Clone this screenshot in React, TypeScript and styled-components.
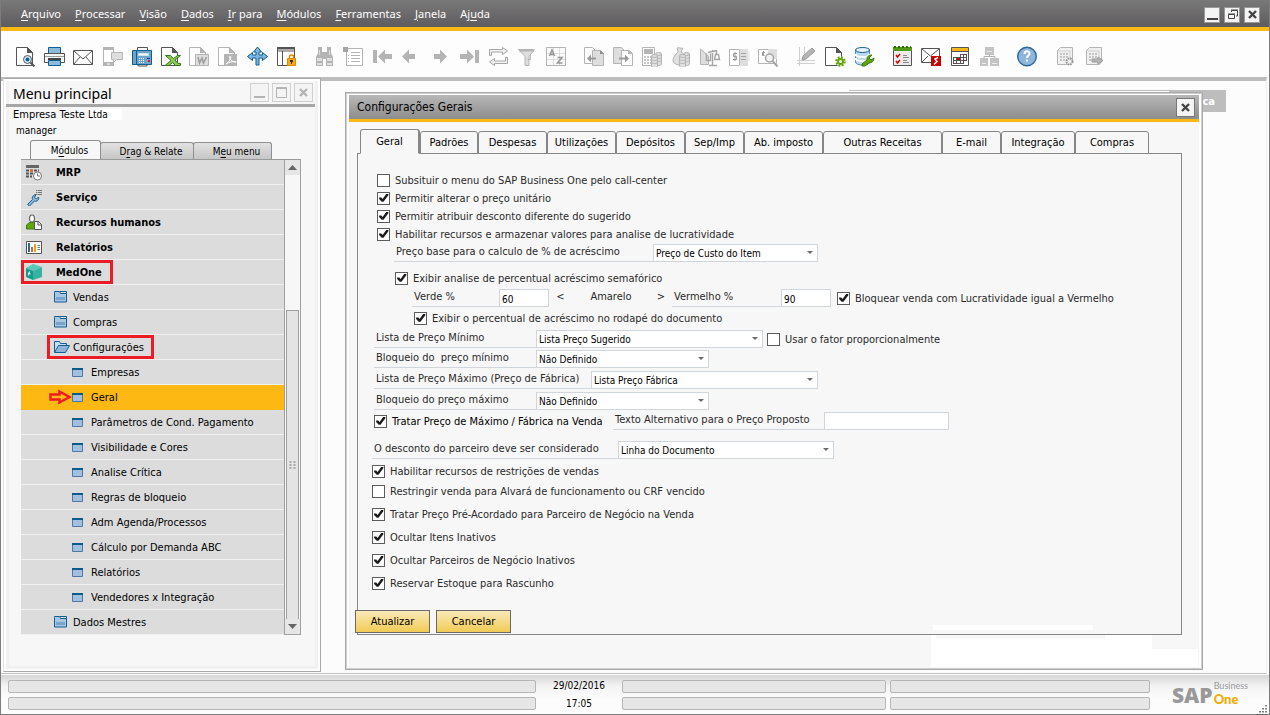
import React from "react";
import styled, { createGlobalStyle } from "styled-components";

const uiFont = '"DejaVu Sans Condensed", "Noto Sans", sans-serif';
const titleFont = '"Noto Sans", "Open Sans", sans-serif';
const gold = "#fdb813";

const Global = createGlobalStyle`
  *, *::before, *::after { box-sizing: border-box; }
  body { margin: 0; background: #fcfcfc; font-family: ${uiFont}; font-size: 11px; color: #000; }
  button, input, select { font: inherit; color: inherit; margin: 0; }
  button { padding: 0; border: 0; background: none; cursor: pointer; }
  ul { list-style: none; margin: 0; padding: 0; }
  svg { display: block; }
`;

/* ---------- shell ---------- */

const Shell = styled.div`
  min-height: 100vh;
  display: flex;
  flex-direction: column;
  border: 1px solid #7d7d7d;
  border-top: 0;
  background: #fcfcfc;
`;

const MenuBar = styled.header`
  height: 31px;
  flex: none;
  display: flex;
  align-items: center;
  justify-content: space-between;
  padding: 2px 9px 0 20px;
  background: linear-gradient(#7a7979, #5e5b5e);
  border-bottom: 4px solid ${gold};
`;

const MenuItems = styled.nav`
  display: flex;
  gap: 14px;
  padding-bottom: 2px;
`;

const MenuItem = styled.button`
  font-family: ${titleFont};
  font-size: 11px;
  line-height: 18px;
  color: #fff;
`;

const Accel = styled.span`
  text-decoration: underline;
  text-underline-offset: 2px;
`;

const WindowButtons = styled.div<{ $gap: number }>`
  display: flex;
  gap: ${(p) => p.$gap}px;
`;

const WindowButton = styled.button<{ $size: number; $tone: string; $line: string }>`
  width: ${(p) => p.$size}px;
  height: ${(p) => p.$size}px;
  display: grid;
  place-items: center;
  background: #f4f4f4;
  border: 1px solid ${(p) => p.$line};
  color: ${(p) => p.$tone};
`;

const Toolbar = styled.div`
  height: 46px;
  flex: none;
  display: flex;
  align-items: center;
  gap: 9px;
  padding: 5px 0 0 10px;
  background: #fdfdfd;
`;

const ToolGroup = styled.div`
  display: flex;
`;

const ToolButton = styled.button`
  width: 29px;
  height: 29px;
  display: grid;
  place-items: center;
`;

const Workspace = styled.main`
  position: relative;
  isolation: isolate;
  flex: 1;
  display: flex;
  align-items: stretch;
  padding: 0 63px 1px 2px;
  margin-right: 2px;
  border-top: 4px solid #bdbdbd;
  border-right: 1px solid #f0f0f4;
  border-bottom: 1px solid #c2c2c2;
`;

const BackWindow = styled.div`
  position: absolute;
  z-index: -1;
  top: 9px;
  right: 40px;
  width: 377px;
  height: 22px;
  display: flex;
  justify-content: flex-end;
  border-top: 1px solid #bdbdbd;
`;

const BackTab = styled.span`
  width: 57px;
  padding-right: 11px;
  text-align: right;
  background: #bdbdbd;
  color: #fff;
  font-weight: 700;
  line-height: 21px;
`;

/* ---------- main menu window ---------- */

const Side = styled.aside`
  flex: none;
  width: 318px;
  margin: -3px 24px 0 0;
  display: flex;
  flex-direction: column;
  border: 1px solid #a9a9a9;
  border-left-color: #e4e4e4;
  background: #fff;
  padding: 2px;
`;

const SideInner = styled.div`
  flex: 1;
  border: 3px solid #f1f1f1;
  border-top: 0;
  background: #f7f7f7;
`;

const SideHead = styled.div`
  display: flex;
  align-items: center;
  justify-content: space-between;
  height: 26px;
  margin-left: -3px;
  padding: 0 2px 0 7px;
  border-bottom: 3px solid #a6a6a6;
`;

const SideTitle = styled.h1`
  margin: 0;
  padding-top: 3px;
  font-family: ${titleFont};
  font-size: 14px;
  line-height: 20px;
  font-weight: 400;
`;

const Company = styled.div`
  padding-left: 4px;
  line-height: 16px;
`;

const CompanySuffix = styled.span`
  padding-right: 14px;
  font-size: 10px;
  background: #fff;
`;

const UserName = styled.div`
  padding-left: 7px;
  font-size: 10px;
  line-height: 16px;
`;

const SideTabs = styled.div`
  display: flex;
  align-items: flex-end;
  padding-left: 21px;
  margin-top: 1px;
`;

const SideTab = styled.button<{ $on?: boolean; $w: number }>`
  width: ${(p) => p.$w}px;
  height: ${(p) => (p.$on ? 19 : 17)}px;
  font-size: 10px;
  border: 1px solid #8f8f8f;
  border-bottom: 0;
  border-radius: 3px 3px 0 0;
  padding-left: 8px;
  margin-right: -1px;
  background: ${(p) => (p.$on ? "#f7f7f7" : "linear-gradient(#e2e2e2, #c6c6c6)")};
`;

const TreeBox = styled.div`
  display: flex;
  width: 280px;
  margin-left: 12px;
  border-top: 1px solid #999;
`;

const Tree = styled.ul`
  flex: 1;
`;

const TreeRow = styled.li<{ $level: number; $on?: boolean }>`
  position: relative;
  height: 25px;
  display: flex;
  align-items: center;
  padding-left: ${(p) => [5, 33, 51][p.$level]}px;
  background: ${(p) => (p.$on ? gold : "#dcdcdc")};
  border-bottom: 1px solid ${(p) => (p.$on ? gold : "#f0f0f0")};
  font-weight: ${(p) => (p.$level === 0 ? 700 : 400)};
`;

const TreeIcon = styled.span<{ $level: number }>`
  flex: none;
  width: ${(p) => [30, 19, 19][p.$level]}px;
`;

const RedFrame = styled.span<{ $left: number; $w: number }>`
  position: absolute;
  top: 0;
  left: ${(p) => p.$left}px;
  width: ${(p) => p.$w}px;
  height: 24px;
  border: 3px solid #ed1c24;
`;

const RedArrow = styled.svg`
  position: absolute;
  left: 28px;
  top: 4px;
`;

const Scroll = styled.div`
  width: 17px;
  display: flex;
  flex-direction: column;
  align-items: center;
  border: 1px solid #a0a0a0;
  border-top: 0;
  background: #f7f7f7;
`;

const ScrollEnd = styled.button`
  width: 15px;
  height: 15px;
  flex: none;
  display: grid;
  place-items: center;
  background: #e6e6e6;
`;

const ScrollThumb = styled.div`
  width: 13px;
  flex: 1;
  margin-top: 135px;
  display: grid;
  place-items: center;
  background: #e4e4e4;
  border: 1px solid #a0a0a0;
  border-bottom: 0;
`;

/* ---------- settings dialog ---------- */

const Dialog = styled.section`
  flex: 1;
  min-width: 0;
  margin: 11px 0 2px;
  display: flex;
  flex-direction: column;
  border: 1px solid #a9a9a9;
  outline: 1px solid #cfcfcf;
  outline-offset: -2px;
  background: #fff;
  padding: 2px 3px 1px 3px;
`;

const DialogHead = styled.header`
  height: 27px;
  flex: none;
  display: flex;
  align-items: center;
  justify-content: space-between;
  padding: 0 4px 0 8px;
  background: linear-gradient(#b8b8b8, #8d8d8d);
  border-bottom: 3px solid ${gold};
`;

const DialogTitle = styled.h2`
  margin: 0;
  font-size: 12px;
  line-height: 20px;
  font-weight: 400;
`;

const DialogBody = styled.div`
  position: relative;
  isolation: isolate;
  flex: 1;
  display: flex;
  flex-direction: column;
  padding: 7px 17px 33px 8px;
  background: #f7f7f7;
`;

const Backdrop = styled.svg`
  position: absolute;
  z-index: -1;
  right: 0;
  bottom: 0;
`;

const Tabs = styled.div`
  display: flex;
  align-items: flex-end;
  padding-left: 3px;
  margin-bottom: -1px;
  position: relative;
`;

const Tab = styled.button<{ $on?: boolean; $w: number }>`
  flex: 0 1 ${(p) => p.$w}px;
  height: ${(p) => (p.$on ? 25 : 23)}px;
  white-space: nowrap;
  border: 1px solid #868686;
  border-right-width: ${(p) => (p.$on ? 2 : 1)}px;
  border-bottom-color: ${(p) => (p.$on ? "#f7f7f7" : "#868686")};
  border-radius: 3px 3px 0 0;
  background: #f7f7f7;
  text-align: center;
`;

const Panel = styled.form`
  flex: 1;
  display: flex;
  flex-direction: column;
  padding: 17px 14px 0 14px;
  border: 1px solid #868686;
  color: #2a2a2a;
`;

const Row = styled.div<{ $indent: number; $top?: number }>`
  display: flex;
  align-items: center;
  height: 18px;
  margin-top: ${(p) => p.$top ?? 0}px;
  padding-left: ${(p) => p.$indent}px;
  white-space: nowrap;
`;

const CheckLabel = styled.label<{ $gap?: number; $dark?: boolean; $w?: number }>`
  display: flex;
  align-items: center;
  gap: 5px;
  margin-left: ${(p) => p.$gap ?? 0}px;
  width: ${(p) => (p.$w ? `${p.$w}px` : "auto")};
  color: ${(p) => (p.$dark ? "#000" : "inherit")};
`;

const CheckText = styled.span`
  padding-top: 2px;
  line-height: 16px;
`;

const Box = styled.input`
  appearance: none;
  flex: none;
  width: 13px;
  height: 13px;
  border: 1px solid #5c5c5c;
  background: #fff;
  display: grid;

  &:checked::before {
    content: "";
    background: #1c1c1c;
    clip-path: polygon(10% 46%, 30% 46%, 42% 60%, 74% 14%, 94% 14%, 94% 26%, 50% 84%, 34% 84%, 10% 60%);
  }
`;

const FieldLabel = styled.label<{ $w: number }>`
  flex: none;
  width: ${(p) => p.$w}px;
  height: 18px;
  padding-left: 2px;
  line-height: 15px;
  border-bottom: 1px solid #d0d6dc;
`;

const Gap = styled.span<{ $w: number }>`
  flex: none;
  width: ${(p) => p.$w}px;
  line-height: 15px;
  height: 18px;
  text-align: center;
`;

const Field = styled.input<{ $w: number }>`
  flex: none;
  width: ${(p) => p.$w}px;
  height: 18px;
  padding: 2px 2px 0;
  font-size: 10px;
  color: #000;
  background: #fff;
  border: 1px solid #d0d6dc;
`;

const SelectBox = styled.span<{ $w: number }>`
  flex: none;
  display: grid;
  grid-template-columns: 1fr 13px;
  align-items: center;
  width: ${(p) => p.$w}px;
  height: 18px;
  background: #fff;
  border: 1px solid #d0d6dc;
`;

const Select = styled.select`
  grid-area: 1 / 1 / 2 / 3;
  appearance: none;
  width: 100%;
  height: 16px;
  padding: 2px 2px 0;
  font-size: 10px;
  line-height: 14px;
  color: #000;
  background: none;
  border: 0;
`;

const SelectArrow = styled.svg`
  grid-area: 1 / 2 / 2 / 3;
  pointer-events: none;
`;

const Actions = styled.div`
  display: flex;
  gap: 6px;
  margin: auto 0 0 -17px;
  padding: 16px 0 1px;
`;

const ActionButton = styled.button`
  width: 75px;
  height: 23px;
  color: #000;
  border: 1px solid #6a6a6a;
  background: linear-gradient(#f9e9b8, #f2cb55);
`;

/* ---------- status bar ---------- */

const Status = styled.footer`
  flex: none;
  display: flex;
  align-items: center;
  height: 39px;
  margin-top: 1px;
  padding: 1px 0 0 7px;
  background: linear-gradient(#d6d6d6, #f4f4f4 30%, #fcfcfc 60%);
`;

const StatusCells = styled.div<{ $grow: number }>`
  flex: ${(p) => p.$grow} 1 0;
  display: grid;
  gap: 4px;
`;

const StatusCell = styled.div`
  height: 13px;
  border: 1px solid #b5b5b5;
  border-radius: 2px;
  background: #e6e6e6;
`;

const Clock = styled.div`
  width: 82px;
  margin: 0 2px;
  text-align: center;
  font-size: 10px;
  line-height: 18px;
`;

const StatusGap = styled.div`
  width: 4px;
`;

const Brand = styled.div`
  width: 119px;
  display: flex;
  align-items: center;
  padding-left: 22px;
  position: relative;
`;

const BrandSap = styled.span`
  font-family: "Open Sans", sans-serif;
  font-size: 21px;
  line-height: 26px;
  font-weight: 800;
  color: #999;
`;

const BrandName = styled.span`
  display: grid;
  padding: 0 0 3px 1px;
  font-family: Lato, sans-serif;
`;

const BrandTop = styled.span`
  font-size: 9px;
  line-height: 11px;
  color: #999;
`;

const BrandOne = styled.span`
  font-size: 13px;
  line-height: 16px;
  font-weight: 900;
  color: #f0ab00;
`;

const Grip = styled.svg`
  position: absolute;
  right: 2px;
  bottom: -6px;
`;

/* ---------- toolbar drawings ---------- */

const g = "#b4b4b4";
const l = "#dedede";
const d = "#555";
const b = "#0f5f92";

const Doc = ({ c = d, x = 1 }: { c?: string; x?: number }) => (
  <g transform={`translate(${x} 0)`}>
    <path d="M.5 1.500h11l5 5v13H.5z" fill="#fff" stroke={c} />
    <path d="M11 1l6 6h-6z" fill={c} />
  </g>
);

const Coins = ({ x, y }: { x: number; y: number }) => (
  <g transform={`translate(${x} ${y})`} fill={l} stroke={g}>
    <path d="M.5 2v10c0 2 6 2 6 0V2" />
    <path d="M.5 5c0 2 6 2 6 0M.5 8c0 2 6 2 6 0" fill="none" />
    <ellipse cx="3.500" cy="2" rx="3" ry="1.500" />
  </g>
);

const Server = () => (
  <>
    <path d="M2.500 4.500l3-3h12v14l-2 3h-13z" fill="#f0f0f0" stroke={g} />
    <path d="M3 5h12V18" fill="none" stroke="#cfcfcf" />
    <path d="M5 8h9M5 11h9M5 14h9" stroke="#999" strokeDasharray="2 1" />
  </>
);

const icons: Record<string, React.ReactNode> = {
  preview: (
    <>
      <Doc />
      <circle cx="12.500" cy="13.500" r="4" fill="#d6ecfa" stroke={d} />
      <circle cx="12.500" cy="13.500" r="2" fill={b} />
      <path d="M15.500 16.500l4 4" stroke={d} strokeWidth="2" />
    </>
  ),
  print: (
    <>
      <path d="M4.500 1.500h12v6h-12z" fill="#8db9da" stroke={b} />
      <path d="M.5 7.500h20v9H.5z" fill="#f6f6f6" stroke={d} />
      <path d="M1 10.500h19" stroke="#999" />
      <path d="M4 13h13" stroke="#444" strokeWidth="2" />
      <path d="M4.500 14.500h12v5h-12z" fill="#8db9da" stroke={b} />
    </>
  ),
  mail: (
    <>
      <path d="M.5 4.500h19v14H.5z" fill="#fff" stroke={d} />
      <path d="M1 5l9 8 9-8M1 18l6-7M19 18l-6-7" fill="none" stroke={d} />
    </>
  ),
  sms: (
    <>
      <path d="M1 1h11v19H1z" fill={g} />
      <path d="M2 4h9v12H2z" fill="#fff" />
      <path d="M5 18h3" stroke="#fff" />
      <path d="M9.500 6.500h11v7h-6l-3 3v-3h-2z" fill={l} stroke={g} />
    </>
  ),
  fax: (
    <>
      <path d="M6.500 1.500h10v4h-10zM7 18.500h9v1.500h-9z" fill="#fff" stroke={d} />
      <path d="M1.500 4.500h19v14h-19z" fill="#6ea3cc" stroke={b} />
      <path d="M5.500 5v13" stroke={b} />
      <path d="M7.500 7.500h10v2h-10z" fill="#fff" stroke="#cfe3f2" />
      <path d="M8 12.500h6M8 14.500h6M8 16.500h6" stroke="#fff" strokeDasharray="1 1" />
      <path d="M16 12.500h3" stroke="#123c5c" />
      <path d="M17 15h2" stroke="#d22" strokeWidth="2" />
    </>
  ),
  excel: (
    <>
      <Doc />
      <path d="M5.500 9.500h5l3 3 4-3h3l-5.500 4.500 3 3.500h2.500v2h-5l-3-3-3.500 3H5l6-5z" fill="#8cc84b" stroke="#2f7d1c" />
    </>
  ),
  word: (
    <>
      <Doc c={g} x={0} />
      <path d="M6.500 8.500h13v11h-13z" fill={l} stroke={g} />
      <path d="M9 11l1.500 6 2.500-5 1.500 5 3-6" fill="none" stroke="#9c9c9c" strokeWidth="1.500" />
    </>
  ),
  pdf: (
    <>
      <Doc c={g} x={0} />
      <path d="M6 8h13v12H6z" fill={g} />
      <path d="M8 18c4-2 6-8 4-8s0 6 6 6c-3-1-7 0-10 2z" fill="none" stroke="#fff" />
    </>
  ),
  move: (
    <path
      d="M10.500 1l4 5h-2.500v3h3.500V6.500l5 4-5 4V12H12v7H9v-7H5.500v2.500l-5-4 5-4V9H9V6H6.500z"
      fill="#7db7e0"
      stroke={b}
    />
  ),
  lock: (
    <>
      <path d="M1.500 1.500h17v18h-17z" fill="#fff" stroke={d} />
      <path d="M1 3.500h18" stroke={d} strokeWidth="4" />
      <path d="M2 4h16" stroke="#fff" />
      <path d="M6.500 5v14" stroke={d} />
      <path d="M13.500 12.500v-2c0-2 4-2 4 0v2" fill="none" stroke="#d98c00" strokeWidth="1.500" />
      <path d="M11.500 12.500h8v7h-8z" fill="#fba919" stroke="#d98c00" />
      <path d="M14 14h3v2h-1v2h-1v-2h-1z" fill="#333" />
    </>
  ),
  find: (
    <>
      <path d="M4 1h4v5h5V1h4v6l2 4v9h-7v-7h-3v7H2v-9l2-4z" fill={g} />
      <path d="M3 12h5v3H3zM13 12h5v3h-5zM3 17h5v2H3zM13 17h5v2h-5zM5 4h1v5H5zM15 4h1v5h-1z" fill={l} />
    </>
  ),
  list: (
    <>
      <path d="M3.500 2.500h16v17h-16z" fill="#fff" stroke={g} />
      <path d="M0 1h5v5H0z" fill="#a4a4a4" />
      <path d="M8 6.500h9M8 9.500h9M8 12.500h9M8 15.500h9" stroke={g} />
      <path d="M5 9.500h1M5 12.500h1M5 15.500h1" stroke={g} />
    </>
  ),
  first: <path d="M1 4h4v13H1zM6 10.500l7-7v4.500h7v5h-7v4.500z" fill={g} />,
  prev: <path d="M1 10.500l7-7v4.500h6v5H8v4.500z" fill={g} />,
  next: <path d="M17 10.500l-7-7v4.500H4v5h6v4.500z" fill={g} />,
  last: <path d="M15 10.500l-7-7v4.500H1v5h7v4.500zM16 4h4v13h-4z" fill={g} />,
  refresh: (
    <g fill="none" stroke="#a6a6a6">
      <path d="M1.500 9.500v-6h13v-2l5 3.500-5 3.500v-2.500h-11v3.500z" fill="#f2f2f2" />
      <path d="M19.500 11.500v6h-13v2l-5-3.500 5-3.500v2.500h11v-3.500z" fill="#f2f2f2" />
    </g>
  ),
  filter: (
    <>
      <path d="M1.500 3.500h16l-5.500 7v9H8v-9z" fill={l} stroke={g} />
      <path d="M2 4.500h15" stroke={g} strokeWidth="2" />
      <path d="M13.500 8.500v5h-3" fill="none" stroke={g} />
    </>
  ),
  sort: (
    <>
      <path d="M.5 1.500h19v18H.5z" fill="#fafafa" stroke={g} />
      <path d="M1 7.500h18M1 13.500h18M7.500 2v17M13.500 2v17" stroke={l} />
      <path d="M3.500 10l2.500-6 2.500 6M4 8.500h4M11.500 11.500h4.500l-4.500 5.500h5" fill="none" stroke="#999" strokeWidth="1.600" />
    </>
  ),
  base: (
    <>
      <path d="M.5 1.500h8l3 3v13H.5z" fill="#fff" stroke={g} />
      <path d="M8.500 4.500h8l3 3v12h-11z" fill={l} stroke={g} />
      <path d="M16 4v4h4z" fill="#8e8e8e" />
      <path d="M3 12.500l4-4v3h5v2H7v3z" fill="#999" />
    </>
  ),
  target: (
    <>
      <path d="M.5 1.500h8l3 3v13H.5z" fill={l} stroke={g} />
      <path d="M8.500 4.500h8l3 3v12h-11z" fill="#fff" stroke={g} />
      <path d="M15 4v4h5z" fill={g} />
      <path d="M16 12.500l-4-4v3H6v2h6v3z" fill="#999" />
    </>
  ),
  calc: (
    <>
      <path d="M.5 1.500h12v18H.5z" fill="#fff" stroke={g} />
      <path d="M2 3h9v5H2z" fill={g} />
      <path d="M2 11h8M2 14h8M2 17h8" stroke={g} strokeWidth="1.500" strokeDasharray="2 1" />
      <Coins x={13} y={6} />
      <Coins x={9} y={8} />
    </>
  ),
  money: (
    <>
      <path d="M6 2c2-1 4 1 6 0l-2 4c4 2 6 6 6 9s-3 4-7 4-7-2-7-5 3-6 5-8z" fill={l} stroke={g} />
      <Coins x={12} y={6} />
      <Coins x={8} y={8} />
    </>
  ),
  scales: (
    <>
      <path d="M.5 3v15.500h8V10z" fill={l} stroke={g} />
      <path d="M12.500 4v15M8 6.500l9-2M9 19.500h8M6.500 7.500v7h4v-7M16.500 5v3M14.500 13.500l1-5h3l1 5z" fill="none" stroke="#a6a6a6" strokeWidth="1.400" />
    </>
  ),
  dollar: (
    <>
      <path d="M.5 3.500h18v16H.5z" fill="#fff" stroke={g} />
      <path d="M10 3h9v17h-9z" fill={l} />
      <path d="M10.500 4v15" stroke={g} />
      <path d="M12 7.500h5M12 10.500h5M12 13.500h5" stroke="#a4a4a4" />
      <path d="M8 7.500H4.500v3h3v3H4M6 6v9" fill="none" stroke="#999" />
      <path d="M20 5v10" stroke={l} />
    </>
  ),
  search: (
    <>
      <path d="M.5 3.500h18v14H.5z" fill="#fff" stroke={g} />
      <path d="M10 3h9v10h-9z" fill={l} />
      <path d="M7 6.500H4.500v3h2M5.500 5v5" fill="none" stroke="#999" />
      <circle cx="11.500" cy="12" r="4" fill="#f2f2f2" stroke="#a4a4a4" strokeWidth="1.500" />
      <path d="M14.500 15l5 5.500" stroke="#a4a4a4" strokeWidth="2" />
    </>
  ),
  pencil: (
    <>
      <path d="M3.500 1v19M8.500 1v8M1 14.500h18M1 17.500h18" stroke="#d0d0d0" />
      <path d="M6 14l1-4 9-8 3 3-9 8z" fill={g} stroke="#999" />
    </>
  ),
  docGear: (
    <>
      <Doc x={0} />
      <circle cx="15.500" cy="15.500" r="5" fill="#fff" />
      <circle cx="15.500" cy="15.500" r="4" fill="none" stroke="#62a60a" strokeWidth="2.500" strokeDasharray="1.800 1.340" />
      <circle cx="15.500" cy="15.500" r="2.500" fill="none" stroke="#62a60a" strokeWidth="2" />
    </>
  ),
  database: (
    <>
      <path d="M1.500 4v12c0 4 14 4 14 0V4" fill="#bcd9ee" stroke="#4a8dbd" />
      <path d="M1.500 8c0 4 14 4 14 0M1.500 12c0 4 14 4 14 0" fill="none" stroke="#fff" strokeWidth="2" />
      <ellipse cx="8.500" cy="4" rx="7" ry="2.500" fill="#e8f3fb" stroke={b} />
      <path d="M8 18l5-4c0-4 2-5 5-5l-3 3 2 2 3-2c0 3-2 5-5 5l-4 3-3 0z" fill="#62a60a" stroke="#3c7a12" />
    </>
  ),
  tasks: (
    <>
      <path d="M1.500 2.500h18v17h-18z" fill="#ececec" stroke={d} />
      <path d="M1 1h19v4H1z" fill="#4f9a17" />
      <path d="M2 1h17" stroke="#2e6b0b" strokeWidth="2" strokeDasharray="2 2" />
      <path d="M4 9l1.500 2L8 8M4 15l1.500 2L8 14" fill="none" stroke="#c00" strokeWidth="1.400" />
      <path d="M11 9.500h4M11 11.500h6M11 14.500h4M11 16.500h6" stroke="#888" />
    </>
  ),
  alert: (
    <>
      <path d="M.5 2.500h18v14H.5z" fill="#fff" stroke={d} />
      <path d="M1 3l8.500 7L18 3M1 16l6-6" fill="none" stroke={d} />
      <path d="M10 10h10v10H10z" fill="#c00" />
      <path d="M17 11.500l-3 1.500 2 2.500-3 3" fill="none" stroke="#fff" strokeWidth="1.500" />
    </>
  ),
  calendar: (
    <>
      <path d="M1.500 1.500h17v18h-17z" fill="#fff" stroke={d} />
      <path d="M2 2h16v3H2z" fill="#fbb917" />
      <path d="M2 5.500h16" stroke={d} />
      <path d="M3.500 11.500h13M3.500 14.500h13M3.500 17.500h10M3.500 11v7M6.500 11v7M10.500 8v10M13.500 8v10M16.500 8v7M10 8.500h7" stroke={d} fill="none" />
      <path d="M7 12h3v2H7z" fill="#c00" />
    </>
  ),
  org: (
    <>
      <path d="M6 1h9v8H6zM1 12h8v8H1zM11 12h9v8h-9z" fill="#c4c4c4" />
      <path d="M10.500 9v2M5 12v-1.500h11V12" fill="none" stroke={g} />
      <path d="M8 5.500h5M3 17.500h4M13 17.500h5" stroke="#eee" />
    </>
  ),
  help: (
    <>
      <circle cx="10" cy="10.500" r="9.300" fill="#8fb6dc" stroke="#2a6898" strokeWidth="1.400" />
      <path d="M7.500 8c0-3.500 5-3.500 5-.5 0 2-2.500 2-2.500 4.500M10 13.500v2" fill="none" stroke="#fff" strokeWidth="2" />
    </>
  ),
  serverGear: (
    <>
      <Server />
      <circle cx="14.500" cy="15.500" r="3" fill="#eee" stroke="#999" strokeWidth="2" strokeDasharray="1.500 .9" />
    </>
  ),
  serverGo: (
    <>
      <Server />
      <path d="M8 13h6v-2l5 3.500-5 3.500v-2H8z" fill={g} stroke="#999" />
    </>
  ),
};

const toolGroups: [string, string][][] = [
  [
    ["preview", "Visualizar impressão"], ["print", "Imprimir"], ["mail", "E-mail"], ["sms", "SMS"], ["fax", "Fax"],
    ["excel", "Excel"], ["word", "Word"], ["pdf", "PDF"], ["move", "Iniciar aplicação"], ["lock", "Bloquear tela"],
  ],
  [
    ["find", "Procurar"], ["list", "Adicionar"], ["first", "Primeiro"], ["prev", "Anterior"], ["next", "Próximo"],
    ["last", "Último"], ["refresh", "Atualizar"], ["filter", "Filtrar"], ["sort", "Classificar"],
  ],
  [
    ["base", "Documento base"], ["target", "Documento destino"], ["calc", "Lucro bruto"], ["money", "Meios de pagamento"],
    ["scales", "Volume e peso"], ["dollar", "Lançamento"], ["search", "Consulta"],
  ],
  [["pencil", "Editar"], ["docGear", "Configurar formulário"], ["database", "Consultas"]],
  [["tasks", "Atividades"], ["alert", "Alertas"], ["calendar", "Calendário"], ["org", "Organograma"]],
  [["help", "Ajuda"]],
  [["serverGear", "Configurar servidor"], ["serverGo", "Enviar"]],
];

/* ---------- window glyphs ---------- */

const MinimizeGlyph = () => (
  <svg width="13" height="13"><path d="M1 10h11v2H1z" fill="currentColor" /></svg>
);
const RestoreGlyph = () => (
  <svg width="13" height="13" fill="none" stroke="currentColor">
    <path d="M2.500 6.500h6v4h-6zM2 6h7M5.500 4V2.500h6V8H10M5 2h7" />
  </svg>
);
const MaximizeGlyph = () => (
  <svg width="13" height="13" fill="none" stroke="currentColor"><path d="M1.500 1.500h10v10h-10zM1 2.500h11" /></svg>
);
const CloseGlyph = () => (
  <svg width="13" height="13" stroke="currentColor" strokeWidth="2.400"><path d="M3 3l7 7M10 3l-7 7" /></svg>
);

/* ---------- tree drawings ---------- */

const FolderIcon = () => (
  <svg width="14" height="12">
    <path d="M.5 1.500V.5h5l1 2h6v8.500H.5z" fill="#a9c6e2" stroke="#0f5f92" />
    <path d="M6 .5h6.500v2" fill="none" stroke="#0f5f92" />
    <path d="M2 6h9v3H2z" fill="#7ba4cc" />
  </svg>
);
const OpenFolderIcon = () => (
  <svg width="16" height="12">
    <path d="M.5 11V.5h5l1 2h6V5" fill="#c9dcee" stroke="#0f5f92" />
    <path d="M.5 11.500l4-7h11l-4 7z" fill="#8fb4d8" stroke="#0f5f92" />
  </svg>
);
const FormIcon = () => (
  <svg width="11" height="9">
    <path d="M.5.5h10v8H.5z" fill="#a3bfde" stroke="#4f78a8" />
    <path d="M0 1h11" stroke="#0a5a8c" strokeWidth="2" />
  </svg>
);
const MrpIcon = () => (
  <svg width="17" height="17">
    <path d="M0 2.500h13" stroke="#666" strokeWidth="3" />
    <path d="M0 6.500h13M0 9.500h8M0 12.500h6" stroke="#555" strokeWidth="2" strokeDasharray="3 1" />
    <path d="M4 6.500h3" stroke="#e2641e" strokeWidth="2" />
    <circle cx="11.500" cy="12" r="4" fill="#fff" stroke="#777" />
    <path d="M11.500 9.500V12H14" fill="none" stroke="#777" />
  </svg>
);
const ServiceIcon = () => (
  <svg width="17" height="17">
    <path d="M1.500 15.500l5-5c-1-2 1-5 3.500-5l-1.500 3 2 1.500 2-2c1 3-2 5-4 4l-5 5z" fill="#8fb8dc" stroke="#0f5f92" />
    <path d="M10 1.500h1.500M12 1.500h4M10 3.500h1.500M12 3.500h4M10 5.500h1.500M12 5.500h4" stroke="#777" />
  </svg>
);
const PeopleIcon = () => (
  <svg width="17" height="17">
    <path d="M.5 15V11l3-2.500h4L9 10v5z" fill="#62a60a" stroke="#3c7a12" />
    <ellipse cx="6" cy="4.500" rx="2.500" ry="3.500" fill="#fff" stroke="#666" strokeWidth="1.200" />
    <path d="M8.500 7.500h4l3 3v5h-7z" fill="#fff" stroke="#555" />
    <path d="M12 7.500v3.500h3.500" fill="none" stroke="#555" />
  </svg>
);
const ReportsIcon = () => (
  <svg width="17" height="17">
    <path d="M.5 2.500h15v12H.5z" fill="#fff" stroke="#555" />
    <path d="M3 4v9" stroke="#1f6fa8" strokeWidth="2" />
    <path d="M6 8v5" stroke="#e2641e" strokeWidth="2" />
    <path d="M9 5v8" stroke="#f0a020" strokeWidth="2" />
    <path d="M11.500 6.500H14M11.500 8.500H14M11.500 10.500H14" stroke="#777" />
  </svg>
);
const MedOneIcon = () => (
  <svg width="17" height="17">
    <path d="M0 4l7-4 9 3-9 4z" fill="#5cc7b4" />
    <path d="M0 4l7 3v9l-7-3z" fill="#129c8c" />
    <path d="M7 7l9-4v10l-9 3z" fill="#35b3a0" />
    <path d="M2 9l2.500 1M3.500 7.500l-1 4" stroke="#fff" />
  </svg>
);

type Node = { text: string; level: number; icon: React.ReactNode; on?: boolean; frame?: [number, number] };

const nodes: Node[] = [
  { text: "MRP", level: 0, icon: <MrpIcon /> },
  { text: "Serviço", level: 0, icon: <ServiceIcon /> },
  { text: "Recursos humanos", level: 0, icon: <PeopleIcon /> },
  { text: "Relatórios", level: 0, icon: <ReportsIcon /> },
  { text: "MedOne", level: 0, icon: <MedOneIcon />, frame: [0, 92] },
  { text: "Vendas", level: 1, icon: <FolderIcon /> },
  { text: "Compras", level: 1, icon: <FolderIcon /> },
  { text: "Configurações", level: 1, icon: <OpenFolderIcon />, frame: [26, 107] },
  { text: "Empresas", level: 2, icon: <FormIcon /> },
  { text: "Geral", level: 2, icon: <FormIcon />, on: true },
  { text: "Parâmetros de Cond. Pagamento", level: 2, icon: <FormIcon /> },
  { text: "Visibilidade e Cores", level: 2, icon: <FormIcon /> },
  { text: "Analise Crítica", level: 2, icon: <FormIcon /> },
  { text: "Regras de bloqueio", level: 2, icon: <FormIcon /> },
  { text: "Adm Agenda/Processos", level: 2, icon: <FormIcon /> },
  { text: "Cálculo por Demanda ABC", level: 2, icon: <FormIcon /> },
  { text: "Relatórios", level: 2, icon: <FormIcon /> },
  { text: "Vendedores x Integração", level: 2, icon: <FormIcon /> },
  { text: "Dados Mestres", level: 1, icon: <FolderIcon /> },
];

const menus: [string, string, string][] = [
  ["", "A", "rquivo"], ["", "P", "rocessar"], ["", "V", "isão"], ["", "D", "ados"], ["", "I", "r para"],
  ["", "M", "ódulos"], ["", "F", "erramentas"], ["", "J", "anela"], ["Aj", "u", "da"],
];

const tabs: [string, number][] = [
  ["Geral", 60], ["Padrões", 58], ["Despesas", 69], ["Utilizações", 69], ["Depósitos", 69], ["Sep/Imp", 59],
  ["Ab. imposto", 79], ["Outras Receitas", 119], ["E-mail", 59], ["Integração", 74], ["Compras", 74],
];

/* ---------- form parts ---------- */

type CheckProps = { text: string; on?: boolean; gap?: number; dark?: boolean; w?: number };
const Check = ({ text, on, gap, dark, w }: CheckProps) => (
  <CheckLabel $gap={gap} $dark={dark} $w={w}>
    <Box type="checkbox" defaultChecked={on} />
    <CheckText>{text}</CheckText>
  </CheckLabel>
);

const Combo = ({ id, w, value }: { id: string; w: number; value: string }) => (
  <SelectBox $w={w}>
    <Select id={id} defaultValue={value}>
      <option>{value}</option>
    </Select>
    <SelectArrow width="13" height="12"><path d="M3 4h6L6 7z" fill="#6a6a6a" /></SelectArrow>
  </SelectBox>
);

export default function App() {
  return (
    <Shell>
      <Global />
      <MenuBar>
        <MenuItems>
          {menus.map(([a, k, z]) => (
            <MenuItem key={k + z}>{a}<Accel>{k}</Accel>{z}</MenuItem>
          ))}
        </MenuItems>
        <WindowButtons $gap={4}>
          <WindowButton $size={16} $tone="#444" $line="#999" aria-label="Minimizar"><MinimizeGlyph /></WindowButton>
          <WindowButton $size={16} $tone="#444" $line="#999" aria-label="Restaurar"><RestoreGlyph /></WindowButton>
          <WindowButton $size={16} $tone="#444" $line="#999" aria-label="Fechar"><CloseGlyph /></WindowButton>
        </WindowButtons>
      </MenuBar>

      <Toolbar>
        {toolGroups.map((group, i) => (
          <ToolGroup key={i}>
            {group.map(([name, label]) => (
              <ToolButton key={name} aria-label={label}>
                <svg width="21" height="21" viewBox="0 0 21 21">{icons[name]}</svg>
              </ToolButton>
            ))}
          </ToolGroup>
        ))}
      </Toolbar>

      <Workspace>
        <BackWindow><BackTab>ca</BackTab></BackWindow>

        <Side>
          <SideInner>
            <SideHead>
              <SideTitle>Menu principal</SideTitle>
              <WindowButtons $gap={3}>
                <WindowButton $size={19} $tone="#b4b4b4" $line="#cfcfcf" aria-label="Minimizar"><MinimizeGlyph /></WindowButton>
                <WindowButton $size={19} $tone="#b4b4b4" $line="#cfcfcf" aria-label="Maximizar"><MaximizeGlyph /></WindowButton>
                <WindowButton $size={19} $tone="#b4b4b4" $line="#cfcfcf" aria-label="Fechar"><CloseGlyph /></WindowButton>
              </WindowButtons>
            </SideHead>
            <Company>Empresa Teste <CompanySuffix>Ltda</CompanySuffix></Company>
            <UserName>manager</UserName>
            <SideTabs>
              <SideTab $on $w={71}>M<Accel>ó</Accel>dulos</SideTab>
              <SideTab $w={94}>D<Accel>r</Accel>ag &amp; Relate</SideTab>
              <SideTab $w={79}>M<Accel>e</Accel>u menu</SideTab>
            </SideTabs>
            <TreeBox>
              <Tree>
                {nodes.map((n, i) => (
                  <TreeRow key={i} $level={n.level} $on={n.on}>
                    <TreeIcon $level={n.level}>{n.icon}</TreeIcon>
                    {n.text}
                    {n.frame && <RedFrame $left={n.frame[0]} $w={n.frame[1]} />}
                    {n.on && (
                      <RedArrow width="23" height="16">
                        <path d="M1.500 5.500h9v-3l10 5.500-10 5.500v-3h-9z" fill="none" stroke="#ed1c24" strokeWidth="2.500" />
                      </RedArrow>
                    )}
                  </TreeRow>
                ))}
              </Tree>
              <Scroll>
                <ScrollEnd aria-label="Rolar para cima"><svg width="9" height="5"><path d="M0 5l4.500-5L9 5z" fill="#666" /></svg></ScrollEnd>
                <ScrollThumb>
                  <svg width="7" height="9"><path d="M1.500 0v9M5.500 0v9" stroke="#aaa" strokeWidth="2" strokeDasharray="2 1" /></svg>
                </ScrollThumb>
                <ScrollEnd aria-label="Rolar para baixo"><svg width="9" height="5"><path d="M0 0l4.500 5L9 0z" fill="#666" /></svg></ScrollEnd>
              </Scroll>
            </TreeBox>
          </SideInner>
        </Side>

        <Dialog>
          <DialogHead>
            <DialogTitle>Configurações Gerais</DialogTitle>
            <WindowButton $size={19} $tone="#444" $line="#777" aria-label="Fechar"><CloseGlyph /></WindowButton>
          </DialogHead>
          <DialogBody>
            <Backdrop width="268" height="44">
              <path d="M0 11h221v14h46v18H0zM2 1h160v5H2z" fill="#fff" />
              <path d="M5 6h169v9H5z" fill="#f7f7f7" />
            </Backdrop>
            <Tabs>
              {tabs.map(([name, w], i) => (
                <Tab key={name} $on={i === 0} $w={w}>{name}</Tab>
              ))}
            </Tabs>
            <Panel onSubmit={(e) => e.preventDefault()}>
              <Row $indent={5}><Check text="Subsituir o menu do SAP Business One pelo call-center" /></Row>
              <Row $indent={5}><Check on text="Permitir alterar o preço unitário" /></Row>
              <Row $indent={5}><Check on text="Permitir atribuir desconto diferente do sugerido" /></Row>
              <Row $indent={5}><Check on text="Habilitar recursos e armazenar valores para analise de lucratividade" /></Row>
              <Row $indent={22} $top={1}>
                <FieldLabel $w={259} htmlFor="base">Preço base para o calculo de % de acréscimo</FieldLabel>
                <Combo id="base" w={165} value="Preço de Custo do Item" />
              </Row>
              <Row $indent={23} $top={7}><Check on text="Exibir analise de percentual acréscimo semafórico" /></Row>
              <Row $indent={40} $top={2}>
                <FieldLabel $w={87} htmlFor="green">Verde %</FieldLabel>
                <Field id="green" $w={50} defaultValue="60" />
                <Gap $w={23}>&lt;</Gap>
                <Gap $w={78}>Amarelo</Gap>
                <Gap $w={22}>&gt;</Gap>
                <FieldLabel $w={109} htmlFor="red">Vermelho %</FieldLabel>
                <Field id="red" $w={50} defaultValue="90" />
                <Check gap={6} on text="Bloquear venda com Lucratividade igual a Vermelho" />
              </Row>
              <Row $indent={42} $top={2}><Check on text="Exibir o percentual de acréscimo no rodapé do documento" /></Row>
              <Row $indent={2} $top={3}>
                <FieldLabel $w={162} htmlFor="minList">Lista de Preço Mínimo</FieldLabel>
                <Combo id="minList" w={227} value="Lista Preço Sugerido" />
                <Check gap={4} text="Usar o fator proporcionalmente" />
              </Row>
              <Row $indent={2} $top={2}>
                <FieldLabel $w={162} htmlFor="minLock">Bloqueio do&nbsp; preço mínimo</FieldLabel>
                <Combo id="minLock" w={173} value="Não Definido" />
              </Row>
              <Row $indent={2} $top={3}>
                <FieldLabel $w={217} htmlFor="maxList">Lista de Preço Máximo (Preço de Fábrica)</FieldLabel>
                <Combo id="maxList" w={227} value="Lista Preço Fábrica" />
              </Row>
              <Row $indent={2} $top={3}>
                <FieldLabel $w={162} htmlFor="maxLock">Bloqueio do preço máximo</FieldLabel>
                <Combo id="maxLock" w={173} value="Não Definido" />
              </Row>
              <Row $indent={2} $top={2}>
                <Check on dark w={239} text="Tratar Preço de Máximo / Fábrica na Venda" />
                <FieldLabel $w={211} htmlFor="altText">Texto Alternativo para o Preço Proposto</FieldLabel>
                <Field id="altText" $w={125} />
              </Row>
              <Row $indent={0} $top={11}>
                <FieldLabel $w={246} htmlFor="discount">O desconto do parceiro deve ser considerado</FieldLabel>
                <Combo id="discount" w={216} value="Linha do Documento" />
              </Row>
              <Row $indent={0} $top={3}><Check on text="Habilitar recursos de restrições de vendas" /></Row>
              <Row $indent={0} $top={2}><Check text="Restringir venda para Alvará de funcionamento ou CRF vencido" /></Row>
              <Row $indent={0} $top={5}><Check on text="Tratar Preço Pré-Acordado para Parceiro de Negócio na Venda" /></Row>
              <Row $indent={0} $top={5}><Check on text="Ocultar Itens Inativos" /></Row>
              <Row $indent={0} $top={5}><Check on text="Ocultar Parceiros de Negócio Inativos" /></Row>
              <Row $indent={0} $top={5}><Check on text="Reservar Estoque para Rascunho" /></Row>
              <Actions>
                <ActionButton type="submit">Atualizar</ActionButton>
                <ActionButton type="button">Cancelar</ActionButton>
              </Actions>
            </Panel>
          </DialogBody>
        </Dialog>
      </Workspace>

      <Status>
        <StatusCells $grow={528}><StatusCell /><StatusCell /></StatusCells>
        <Clock>29/02/2016<br />17:05</Clock>
        <StatusCells $grow={264}><StatusCell /><StatusCell /></StatusCells>
        <StatusGap />
        <StatusCells $grow={260}><StatusCell /><StatusCell /></StatusCells>
        <Brand>
          <BrandSap>SAP</BrandSap>
          <BrandName><BrandTop>Business</BrandTop><BrandOne>One</BrandOne></BrandName>
          <Grip width="12" height="12">
            <path d="M11 1v11M8 4v8M5 7v5M2 10v2" stroke="#555" strokeWidth="1.500" strokeDasharray="1.500 1.500" />
          </Grip>
        </Brand>
      </Status>
    </Shell>
  );
}
